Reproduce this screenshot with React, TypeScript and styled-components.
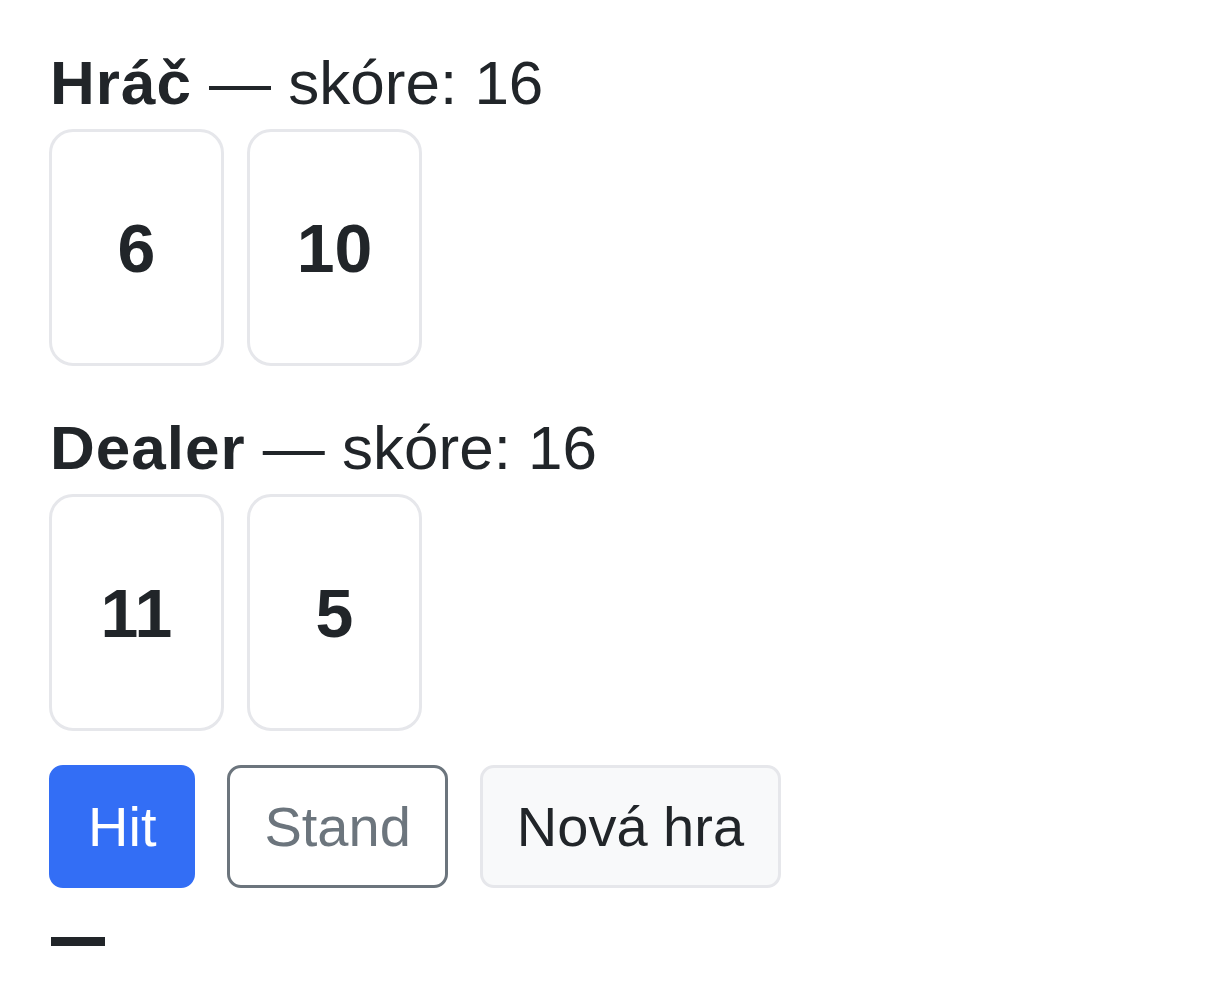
import React from "react";
import styled, { createGlobalStyle } from "styled-components";

const Global = createGlobalStyle`
  html, body { margin: 0; padding: 0; background: #ffffff; }
  body { font-family: "Liberation Sans", Arial, sans-serif; color: #212529; }
`;

const Page = styled.main`
  display: flex;
  flex-direction: column;
  padding: 46px 0 0 49px;
`;

const Section = styled.section`
  display: flex;
  flex-direction: column;
  & + & { margin-top: 45px; }
`;

const Heading = styled.h2`
  margin: 0 0 9px;
  font-size: 62px;
  line-height: 74px;
  font-weight: 400;
  padding-left: 1px;
  strong { font-weight: 700; letter-spacing: 1px; }
`;

const Hand = styled.div`
  display: flex;
  gap: 23px;
`;

const Card = styled.div`
  box-sizing: border-box;
  width: 175px;
  height: 237px;
  border: 3px solid #e6e7eb;
  border-radius: 24px;
  background: #fff;
  display: flex;
  align-items: center;
  justify-content: center;
  font-size: 68px;
  font-weight: 700;
  line-height: 1;
`;

const Controls = styled.div`
  display: flex;
  gap: 32px;
  margin-top: 34px;
`;

type Variant = "primary" | "outline" | "light";

const Button = styled.button<{ $variant: Variant }>`
  box-sizing: border-box;
  height: 123px;
  padding: 0 ${(p) => (p.$variant === "primary" ? 36 : 34)}px;
  font-family: "Liberation Sans", Arial, sans-serif;
  font-size: 56px;
  line-height: 1;
  border-radius: 14px;
  border: 3px solid
    ${(p) =>
      p.$variant === "primary" ? "#336ef5" : p.$variant === "outline" ? "#6c757d" : "#e6e7eb"};
  background: ${(p) =>
    p.$variant === "primary" ? "#336ef5" : p.$variant === "outline" ? "#ffffff" : "#f8f9fa"};
  color: ${(p) =>
    p.$variant === "primary" ? "#ffffff" : p.$variant === "outline" ? "#6c757d" : "#212529"};
  cursor: pointer;
`;

const Status = styled.p`
  margin: 30px 0 0 4px;
  font-size: 50px;
  line-height: 40px;
  font-weight: 700;
  color: #212529;
  -webkit-text-stroke: 4px #212529;
`;

const hands = [
  { name: "Hráč", score: 16, cards: [6, 10] },
  { name: "Dealer", score: 16, cards: [11, 5] },
];

export default function App() {
  return (
    <>
      <Global />
      <Page>
        {hands.map((h) => (
          <Section key={h.name}>
            <Heading>
              <strong>{h.name}</strong> — skóre: {h.score}
            </Heading>
            <Hand>
              {h.cards.map((c, i) => (
                <Card key={i}>{c}</Card>
              ))}
            </Hand>
          </Section>
        ))}
        <Controls>
          <Button $variant="primary">Hit</Button>
          <Button $variant="outline">Stand</Button>
          <Button $variant="light">Nová hra</Button>
        </Controls>
        <Status>—</Status>
      </Page>
    </>
  );
}
